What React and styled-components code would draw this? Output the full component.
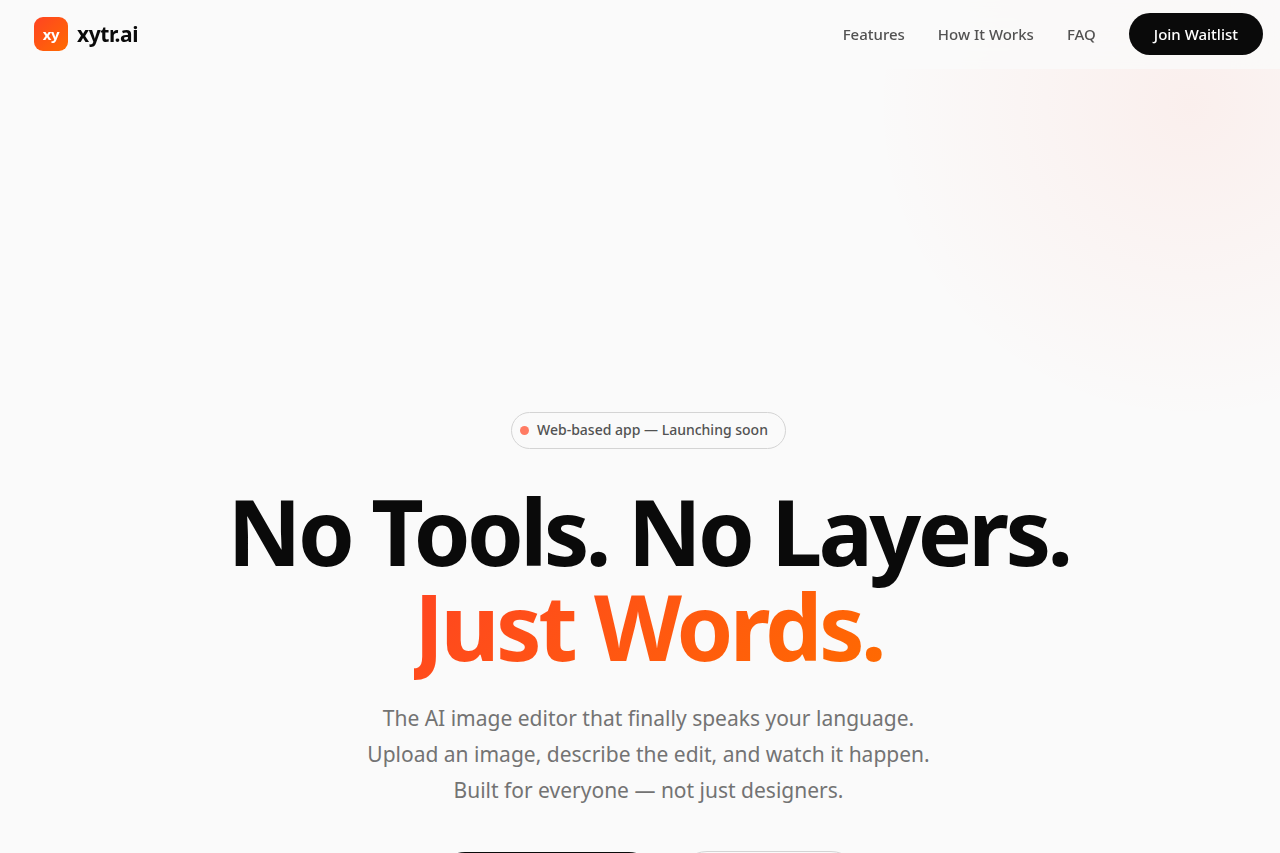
import React from "react";
import styled, { createGlobalStyle } from "styled-components";

const GlobalStyle = createGlobalStyle`
  *, *::before, *::after { box-sizing: border-box; }
  body {
    margin: 0;
    background: #fafafa;
    color: #0a0a0a;
    font-family: "Noto Sans", "Liberation Sans", sans-serif;
  }
`;

const Page = styled.div`
  position: relative;
  height: 100vh;
  overflow: hidden;
`;

const Glow = styled.div`
  position: absolute;
  top: -215px;
  right: -230px;
  width: 640px;
  height: 640px;
  background: radial-gradient(circle, #ff4422 0%, transparent 70%);
  opacity: 0.06;
  pointer-events: none;
`;

const Nav = styled.nav`
  position: relative;
  z-index: 1;
  display: flex;
  align-items: center;
  justify-content: space-between;
  padding: 13px 17px 14px 34px;
  background: rgba(250, 250, 250, 0.8);
  backdrop-filter: blur(20px);
`;

const Logo = styled.a`
  display: flex;
  align-items: center;
  gap: 9px;
  color: #0a0a0a;
  font-size: 21px;
  line-height: 34px;
  font-weight: 700;
  letter-spacing: -0.02em;
  text-decoration: none;
`;

const LogoMark = styled.span`
  display: grid;
  place-items: center;
  width: 34px;
  height: 34px;
  border-radius: 9px;
  background: linear-gradient(135deg, #ff4422, #ff6b00);
  color: #fff;
  font-size: 15px;
`;

const Links = styled.div`
  display: flex;
  align-items: center;
  gap: 33px;
`;

const NavLink = styled.a`
  color: #525252;
  font-size: 15px;
  line-height: 24px;
  font-weight: 500;
  text-decoration: none;
`;

const NavButton = styled.button`
  height: 42px;
  padding: 0 25px;
  border: 0;
  border-radius: 21px;
  background: #0a0a0a;
  color: #fff;
  font: 500 15px/24px "Noto Sans", sans-serif;
`;

const Hero = styled.main`
  position: relative;
  display: flex;
  flex-direction: column;
  align-items: center;
  padding: 343px 0 64px 17px;
  text-align: center;
`;

const Badge = styled.div`
  display: flex;
  align-items: center;
  gap: 8px;
  padding: 7px 17px 8px 8px;
  border: 1px solid #d4d4d4;
  border-radius: 19px;
  color: #525252;
  font-size: 14px;
  line-height: 20px;
  font-weight: 500;
`;

const Dot = styled.span`
  width: 9px;
  height: 9px;
  border-radius: 50%;
  background: #ff7b63;
`;

const Title = styled.h1`
  margin: 35px 0 0;
  font-size: 91px;
  line-height: 95px;
  font-weight: 700;
  letter-spacing: -0.04em;
`;

const Accent = styled.span`
  background: linear-gradient(135deg, #ff4422, #ff6b00);
  background-clip: text;
  -webkit-background-clip: text;
  color: transparent;
`;

const Subtitle = styled.p`
  margin: 26px 0 0;
  color: #737373;
  font-size: 21px;
  line-height: 36px;
`;

const Actions = styled.div`
  display: flex;
  align-items: center;
  justify-content: center;
  gap: 21px;
  margin-top: 43px;
`;

const Action = styled.button`
  padding: 15px 34px;
  border: ${({ $primary }) => ($primary ? "0" : "1px solid #d4d4d4")};
  border-radius: 29px;
  background: ${({ $primary }) => ($primary ? "#0a0a0a" : "transparent")};
  color: ${({ $primary }) => ($primary ? "#fff" : "#0a0a0a")};
  font: 600 17px/26px "Noto Sans", sans-serif;
`;

export default function App() {
  return (
    <>
      <GlobalStyle />
      <Page>
        <Glow />
        <Nav>
          <Logo href="#">
            <LogoMark>xy</LogoMark>
            xytr.ai
          </Logo>
          <Links>
            <NavLink href="#features">Features</NavLink>
            <NavLink href="#how">How It Works</NavLink>
            <NavLink href="#faq">FAQ</NavLink>
            <NavButton type="button">Join Waitlist</NavButton>
          </Links>
        </Nav>
        <Hero>
          <Badge>
            <Dot />
            Web-based app — Launching soon
          </Badge>
          <Title>
            No Tools. No Layers.
            <br />
            <Accent>Just Words.</Accent>
          </Title>
          <Subtitle>
            The AI image editor that finally speaks your language.
            <br />
            Upload an image, describe the edit, and watch it happen.
            <br />
            Built for everyone — not just designers.
          </Subtitle>
          <Actions>
            <Action type="button" $primary>Join the Waitlist →</Action>
            <Action type="button">How It Works</Action>
          </Actions>
        </Hero>
      </Page>
    </>
  );
}
